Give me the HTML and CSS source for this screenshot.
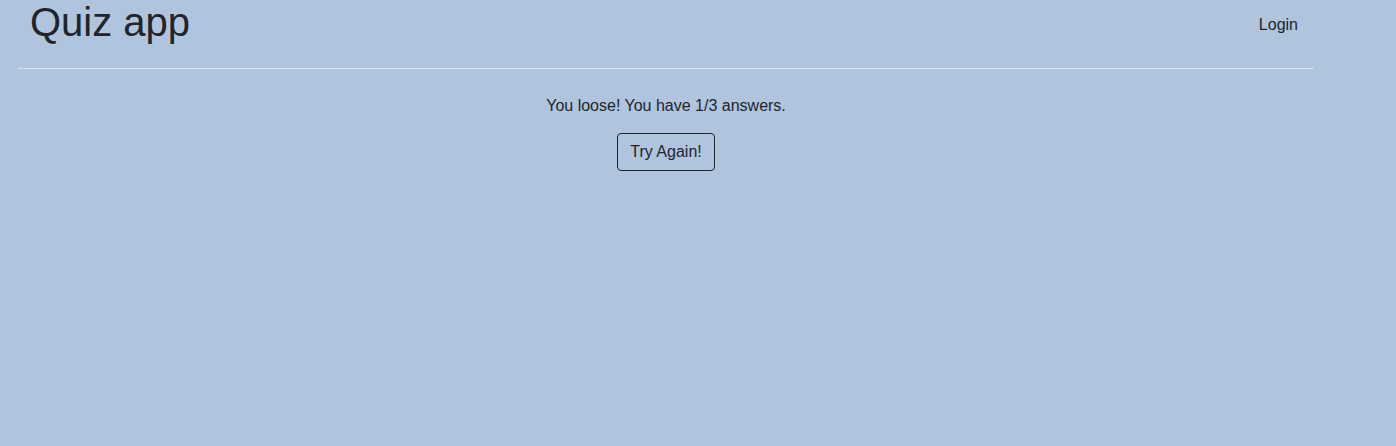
FILE: index.html
```html
<!DOCTYPE html>
<html lang="en">
<head>
<meta charset="utf-8">
<title>Quiz app</title>
<link rel="stylesheet" href="styles.css">
</head>
<body>
<div class="container">
  <header class="header">
    <h1 class="brand">Quiz app</h1>
    <a class="nav-link" href="#">Login</a>
  </header>
  <main class="result">
    <p class="message">You loose! You have 1/3 answers.</p>
    <button class="btn" type="button">Try Again!</button>
  </main>
</div>
</body>
</html>
```
FILE: styles.css
```css
html, body {
  margin: 0;
  padding: 0;
  background: #b0c4de;
  color: #212529;
  font-family: "Liberation Sans", Arial, sans-serif;
  font-size: 16px;
  line-height: 1.5;
}
.container {
  margin: 0 82px 0 18px;
}
.header {
  display: flex;
  justify-content: space-between;
  align-items: flex-start;
  height: 68px;
  border-bottom: 1px solid #dee2e6;
  padding: 0 16px 0 12px;
}
.brand {
  margin: 0;
  font-size: 40px;
  font-weight: 400;
  line-height: 44px;
}
.nav-link {
  color: #212529;
  text-decoration: none;
  margin-top: 13px;
  line-height: 24px;
}
.result {
  display: flex;
  flex-direction: column;
  align-items: center;
  padding-top: 25px;
}
.message {
  margin: 0 0 15px;
}
.btn {
  font-family: inherit;
  font-size: 16px;
  line-height: 24px;
  color: #212529;
  background: transparent;
  border: 1px solid #212529;
  border-radius: 4px;
  padding: 6px 12px;
}
```
